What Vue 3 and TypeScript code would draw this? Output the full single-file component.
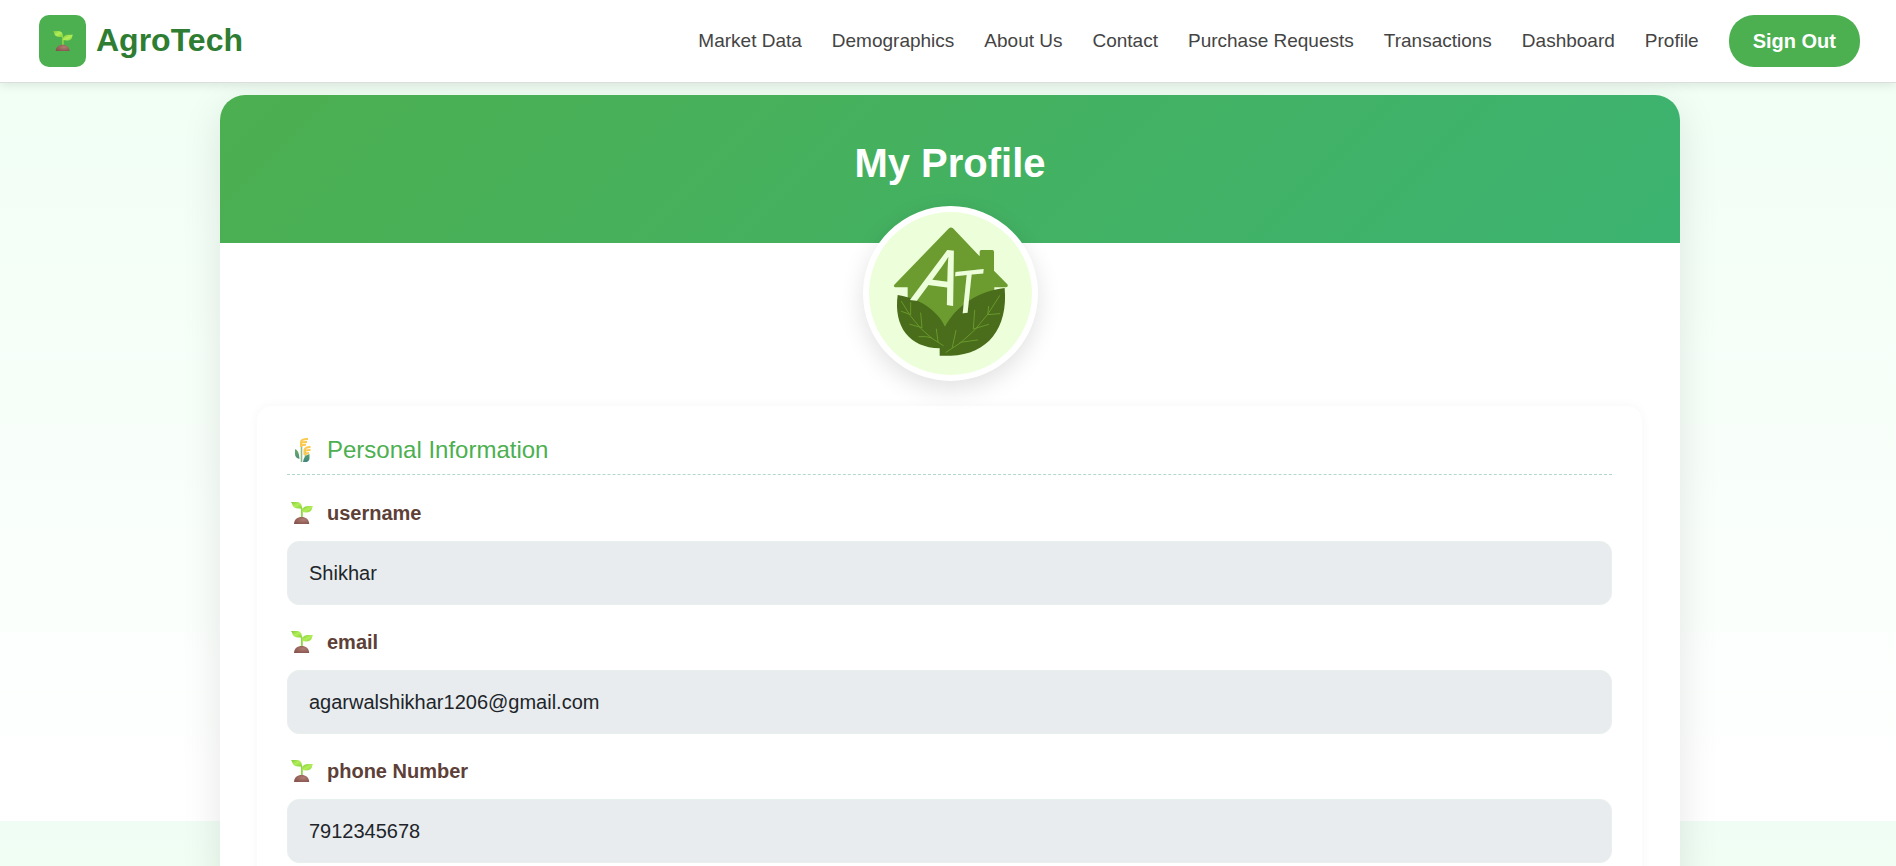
<script setup lang="ts">
interface Field {
  id: string
  label: string
  type: string
  value: string
}

const links: string[] = [
  'Market Data',
  'Demographics',
  'About Us',
  'Contact',
  'Purchase Requests',
  'Transactions',
  'Dashboard',
  'Profile',
]

const fields: Field[] = [
  { id: 'username', label: 'username', type: 'text', value: 'Shikhar' },
  { id: 'email', label: 'email', type: 'email', value: 'agarwalshikhar1206@gmail.com' },
  { id: 'phone', label: 'phone Number', type: 'tel', value: '7912345678' },
]
</script>

<template>
  <div class="page">
    <svg class="defs" aria-hidden="true">
      <defs>
        <linearGradient id="leaf" x1="0" y1="0" x2="1" y2="1">
          <stop offset="0" stop-color="#7fc93a" />
          <stop offset="0.5" stop-color="#b2ee58" />
          <stop offset="1" stop-color="#86d238" />
        </linearGradient>
        <radialGradient id="soil" cx="0.6" cy="0.4" r="0.7">
          <stop offset="0" stop-color="#b07c73" />
          <stop offset="1" stop-color="#84534c" />
        </radialGradient>
        <linearGradient id="blade" x1="0" y1="0" x2="0" y2="1">
          <stop offset="0" stop-color="#6fae62" />
          <stop offset="1" stop-color="#3d8580" />
        </linearGradient>
        <symbol id="sprout" viewBox="0 0 22 22">
          <path d="M10.900 15.500V8Q10.900 6 9 4" fill="none" stroke="#8fd845" stroke-width="1.800" />
          <path d="M0 0H5.500C9.500 0 11 2.500 10.800 6.200C6 7 2 6.500 1.300 2.600Q1 1 0 0Z" fill="url(#leaf)" />
          <path d="M22 4H17.500C13 4 11 6 11 10C16 11 20.500 10.500 21 6.500Q21.200 5 22 4Z" fill="url(#leaf)" />
          <path d="M3 22C3 17.500 6.500 15 10.600 15S18.200 17.500 18.200 22Z" fill="url(#soil)" />
        </symbol>
      </defs>
    </svg>

    <header class="navbar">
      <a class="brand" href="#">
        <span class="brand-mark"><svg class="brand-icon" aria-hidden="true"><use href="#sprout" /></svg></span>
        <span>AgroTech</span>
      </a>
      <nav class="links">
        <a v-for="link in links" :key="link" href="#">{{ link }}</a>
        <button type="button" class="sign-out">Sign Out</button>
      </nav>
    </header>

    <main class="content">
      <article class="profile">
        <div class="banner"><h1>My Profile</h1></div>

        <div class="avatar">
          <svg viewBox="84 66 489 489" role="img" aria-label="AT">
            <path d="M324 115Q330 110 336 115L416 199V185Q416 180 421 180H454Q459 180 459 185V242L499 283Q503 291 495 292H460V420H200V292H163Q156 291 160 284Z" fill="#6c9b2f" />
            <path d="M170 315C236 325 290 362 312 410C344 350 410 303 491 294C502 414 440 494 330 497H296V475C205 473 157 410 170 315Z" fill="#4a6d1b" />
            <g fill="none" stroke="#69982b" stroke-width="3" stroke-linecap="round">
              <path d="M181 334Q233 429 307 467M209 338V374L181 364M239 369L243 413L207 403M286 417L291 455M234 440Q255 438 272 443" />
              <path d="M476 317Q408 437 315 487M443 349L440 374L476 371M401 361L397 417L443 403M345 421L334 472M357 457L410 450" />
            </g>
            <g class="monogram">
              <text x="220" y="332" font-size="230" transform="rotate(8 225 332)">A</text>
              <text x="338" y="370" font-size="176" transform="rotate(-6 362 370)">T</text>
            </g>
          </svg>
        </div>

        <section class="panel">
          <h2>
            <svg class="icon" viewBox="0 0 26 26" aria-hidden="true">
              <path d="M12.500 25V7M16.500 25V15" fill="none" stroke="#8fbd8a" stroke-width="1.600" />
              <path d="M6 12Q10 13 10.500 22Q6 21 6 17ZM20.500 17Q15 18 14 25H17.500Q20.500 24 20.500 21Z" fill="url(#blade)" />
              <g fill="none" stroke="#fbc94f" stroke-width="2">
                <path d="M12 10V5Q12 2 19 2M12 6Q14 4.800 18 5M12 9Q14 7.600 17 7.800" />
                <path d="M15.500 18V13Q16 10 21.500 10M15.500 14.500Q17 12.800 21.500 13M15.500 18Q17 15.800 20 16" />
              </g>
            </svg>
            Personal Information
          </h2>
          <div v-for="field in fields" :key="field.id" class="field">
            <label :for="field.id">
              <svg class="icon" viewBox="-2 -1 26 26" aria-hidden="true"><use href="#sprout" width="22" height="22" /></svg>
              {{ field.label }}
            </label>
            <input :id="field.id" :type="field.type" :value="field.value" readonly />
          </div>
        </section>
      </article>
    </main>
  </div>
</template>

<style>
body {
  margin: 0;
}
</style>

<style scoped>
* {
  box-sizing: border-box;
}

.page {
  display: flex;
  flex-direction: column;
  height: 100vh;
  overflow: hidden;
  font-family: "Liberation Sans", Arial, sans-serif;
  background: linear-gradient(to bottom, #f0fdf4, #f0fff4 10%, #ffffff) 0 -45px / 100% 100vh repeat-y;
}

.defs {
  position: absolute;
  width: 0;
  height: 0;
}

.navbar {
  position: relative;
  z-index: 2;
  display: flex;
  flex: none;
  align-items: center;
  justify-content: space-between;
  padding: 15px 36px 15px 39px;
  background: #ffffff;
  border-bottom: 1px solid #dddddd;
  box-shadow: 0 2px 10px rgba(0, 0, 0, 0.1);
}

.brand {
  display: flex;
  align-items: center;
  gap: 10px;
  color: #2e7d32;
  font-size: 32px;
  font-weight: 700;
  line-height: 48px;
  text-decoration: none;
}

.brand > span:last-child {
  padding-bottom: 2px;
}

.brand-mark {
  display: grid;
  place-items: center;
  width: 47px;
  height: 52px;
  border-radius: 10px;
  background: #4caf50;
}

.brand-icon {
  width: 20px;
  height: 20px;
}

.links {
  display: flex;
  align-items: center;
  gap: 30px;
}

.links a {
  color: #444444;
  font-size: 19px;
  text-decoration: none;
  white-space: nowrap;
}

.sign-out {
  height: 52px;
  padding: 0 24px;
  border: 0;
  border-radius: 25px;
  background: #4caf50;
  color: #ffffff;
  font: 700 20px "Liberation Sans", Arial, sans-serif;
  white-space: nowrap;
}

.content {
  flex: 1;
  padding: 12px 216px 0 220px;
}

.profile {
  padding-bottom: 36px;
  border-radius: 25px;
  background: #ffffff;
  box-shadow: 0 10px 40px rgba(0, 0, 0, 0.1);
}

.banner {
  height: 148px;
  padding-top: 44px;
  border-radius: 25px 25px 0 0;
  background: linear-gradient(135deg, #4caf50, #3cb371);
  text-align: center;
}

h1 {
  margin: 0;
  color: #ffffff;
  font-size: 40px;
  line-height: 48px;
}

.avatar {
  position: relative;
  width: 175px;
  height: 175px;
  margin: -37px auto 25px;
  border: 6px solid #ffffff;
  border-radius: 50%;
  background: #edffda;
  box-shadow: 0 8px 24px rgba(0, 0, 0, 0.12);
}

.avatar svg {
  display: block;
  width: 100%;
  height: 100%;
}

.monogram {
  fill: #edffda;
  font-family: "Liberation Sans Narrow", "Open Sans", sans-serif;
  font-style: italic;
}

.panel {
  margin: 0 38px 0 37px;
  padding: 30px;
  border-radius: 15px;
  background: #ffffff;
  box-shadow: 0 0 12px rgba(0, 0, 0, 0.04);
}

h2 {
  display: flex;
  align-items: center;
  gap: 12px;
  height: 39px;
  margin: 0 0 24px;
  padding-bottom: 10px;
  border-bottom: 1px dashed #b2d8c8;
  color: #4caf50;
  font-size: 24px;
  font-weight: 400;
}

.icon {
  flex: none;
  width: 26px;
  height: 26px;
}

h2 .icon,
label .icon {
  margin-left: 2px;
}

.field {
  margin-bottom: 23px;
}

label {
  display: flex;
  align-items: center;
  gap: 12px;
  margin-bottom: 13px;
  color: #5d4037;
  font-size: 20px;
  font-weight: 700;
  line-height: 29px;
}

input {
  display: block;
  width: 100%;
  height: 64px;
  padding: 0 21px;
  border: 1px solid #e8f0ec;
  border-radius: 12px;
  background: #e8ecef;
  color: #212529;
  font: 400 20px "Liberation Sans", Arial, sans-serif;
  outline: none;
}
</style>
